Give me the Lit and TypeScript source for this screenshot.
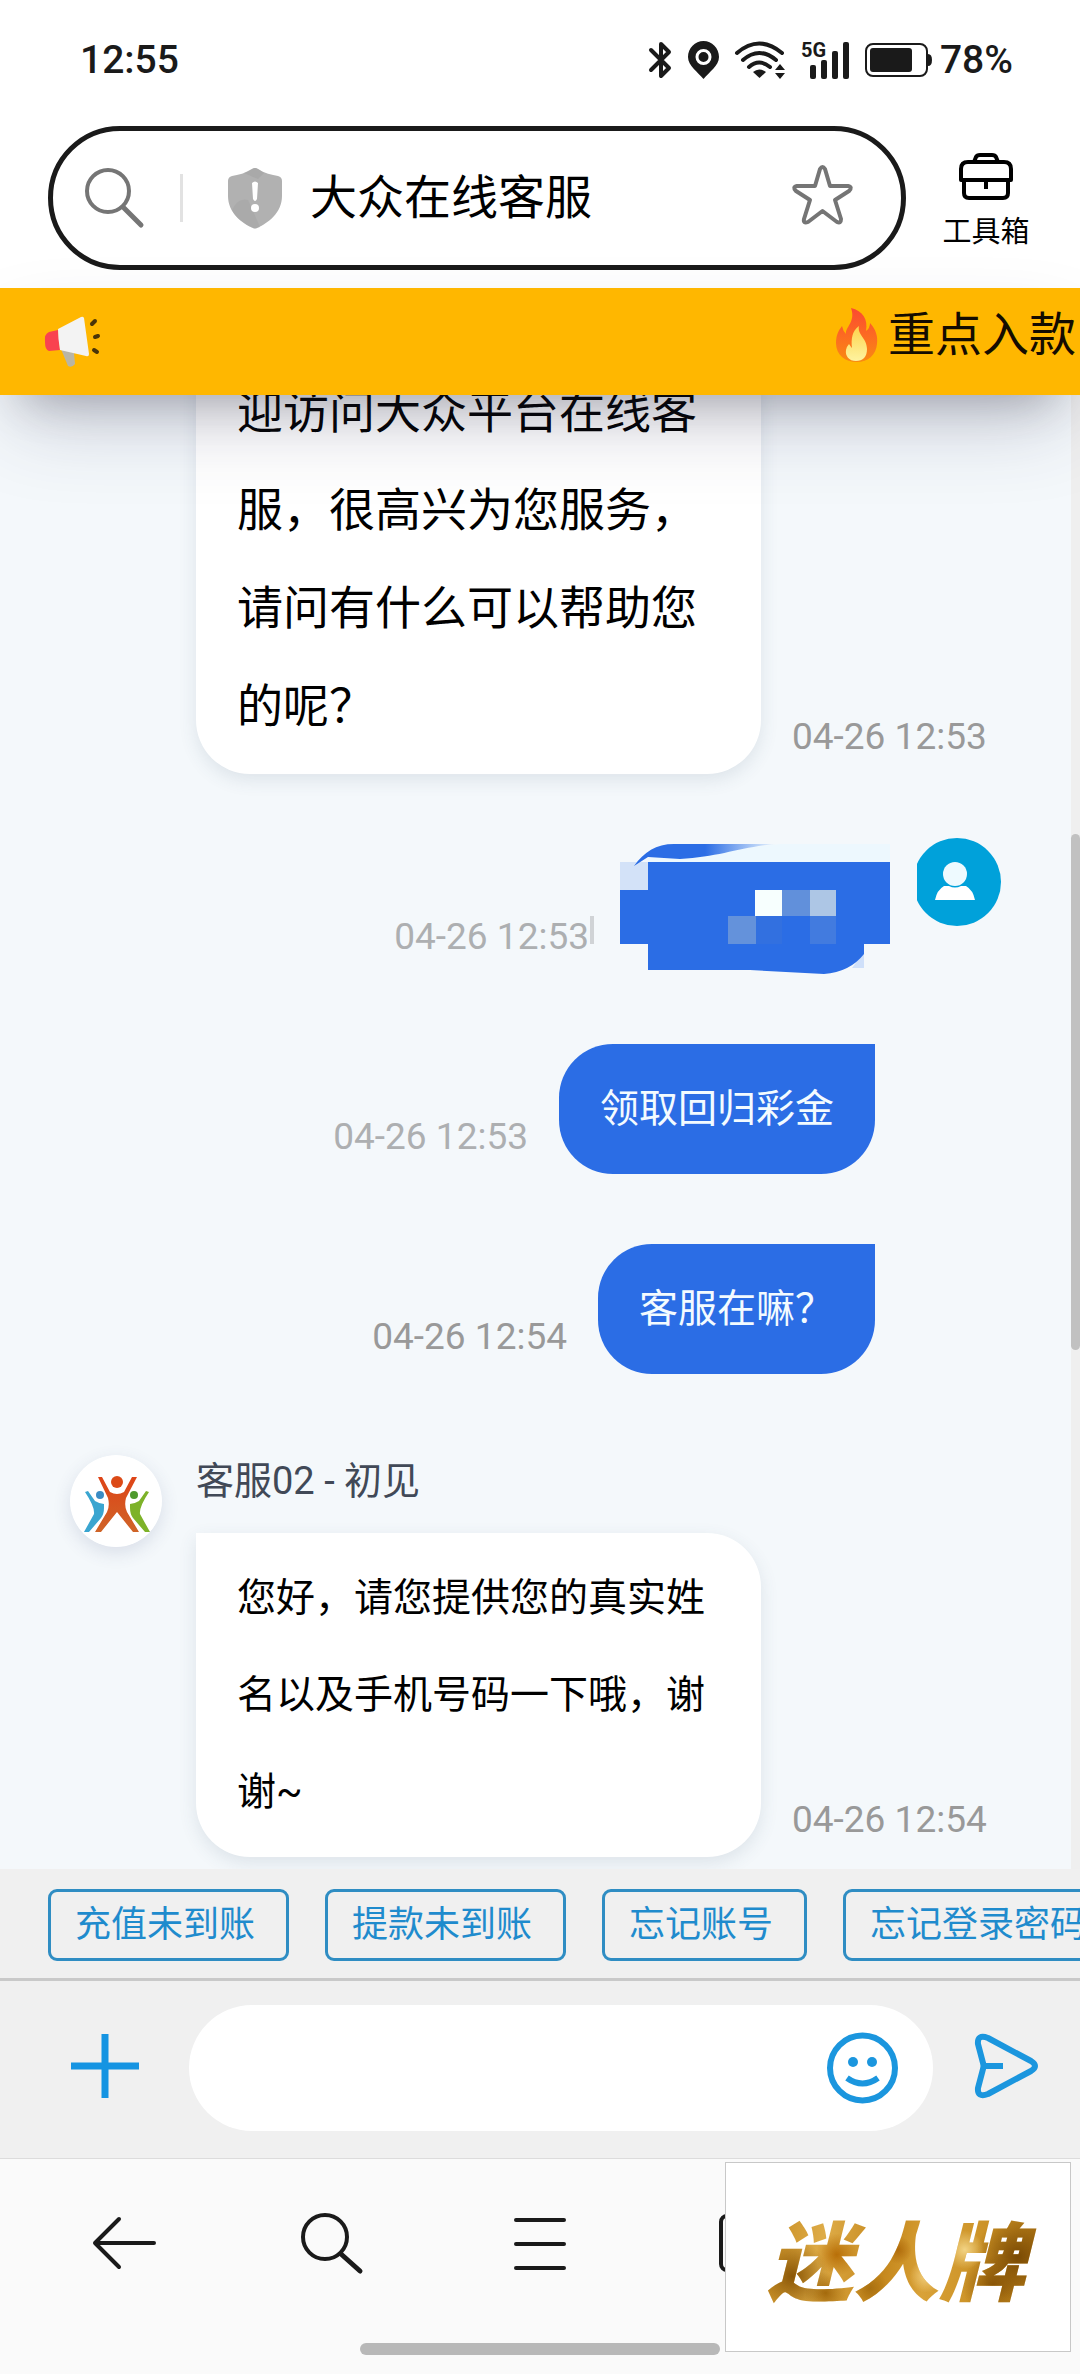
import { LitElement, html, css, svg, nothing } from "lit";
import { customElement, property } from "lit/decorators.js";

const icons = {
  bluetooth: svg`<svg class="icon" width="23" height="38" viewBox="0 0 23 38" aria-hidden="true">
    <path d="M2 9 L20 27 L12 35 V3 L20 11 L2 29" fill="none" stroke="#1a1a1a" stroke-width="4" stroke-linejoin="round" stroke-linecap="round"/></svg>`,
  pin: svg`<svg class="icon" width="31" height="38" viewBox="0 0 31 38" aria-hidden="true">
    <path d="M15.500 0 C24 0 31 7 31 16 C31 25 21 31 15.500 38 C10 31 0 25 0 16 C0 7 7 0 15.500 0Z" fill="#1a1a1a"/>
    <circle cx="15.500" cy="16" r="6.500" fill="#1a1a1a" stroke="#fff" stroke-width="3"/></svg>`,
  wifi: svg`<svg class="icon" width="50" height="38" viewBox="0 0 50 38" aria-hidden="true">
    <g fill="none" stroke="#1a1a1a" stroke-width="4" stroke-linecap="round">
      <path d="M2 12 Q24 -7 47 12"/><path d="M8 19 Q24 5 41 19"/><path d="M14 26 Q24 17 35 26"/></g>
    <path d="M18 31 Q24 26 31 31 L24.500 37Z" fill="#1a1a1a"/>
    <path d="M40 29 L45 23 L50 29Z M40 32 L45 38 L50 32Z" fill="#1a1a1a"/></svg>`,
  signal: svg`<svg class="icon" width="48" height="38" viewBox="0 0 48 38" aria-hidden="true">
    <text x="0" y="16" font-family="Roboto, sans-serif" font-weight="700" font-size="20" fill="#1a1a1a">5G</text>
    <g fill="#1a1a1a"><rect x="9" y="24" width="6" height="14" rx="2"/><rect x="20" y="19" width="6" height="19" rx="2"/>
    <rect x="31" y="10" width="6" height="28" rx="2"/><rect x="42" y="1" width="6" height="37" rx="2"/></g></svg>`,
  battery: svg`<svg class="icon" width="67" height="34" viewBox="0 0 67 34" aria-hidden="true">
    <rect x="1" y="1" width="61" height="32" rx="7" fill="none" stroke="#1a1a1a" stroke-width="2"/>
    <rect x="5" y="5" width="42" height="24" rx="3" fill="#1a1a1a"/>
    <path d="M63 11 Q67 11 67 17 Q67 23 63 23Z" fill="#1a1a1a"/></svg>`,
  find: svg`<svg class="icon" width="58" height="60" viewBox="0 0 58 60" aria-hidden="true">
    <g fill="none" stroke="#757575" stroke-width="4" stroke-linecap="round"><circle cx="23" cy="23" r="21"/><path d="M39 40 L56 57" stroke-width="5"/></g></svg>`,
  shield: svg`<svg class="icon" width="54" height="62" viewBox="0 0 54 62" aria-hidden="true">
    <path d="M24 2 Q27 0 30 2 C36 6 44 8 50 9 Q54 10 54 14 V29 C54 46 40 56 29 61 Q27 62 25 61 C14 56 0 46 0 29 V14 Q0 10 4 9 C10 8 18 6 24 2Z" fill="#b1b1b1"/>
    <path d="M4 43 Q10 30 20 33 L32 60 Q27 62 25 61 C16 57 8 51 4 43Z" fill="#a4a4a4" opacity=".5"/>
    <path d="M16 6 L24 2 Q27 0 30 2 L36 6 L30 12Z" fill="#a3a3a3" opacity=".6"/>
    <path d="M24 16 Q27 13 30 16 L29 32 Q27 36 25 32Z" fill="#fff"/><circle cx="27" cy="41" r="4" fill="#fff"/></svg>`,
  star: svg`<svg class="icon" width="61" height="66" viewBox="0 0 61 66" aria-hidden="true">
    <path d="M28 4 Q30.500 0 33 4 L38 21 H56 Q61 22 57 26 L43 35 L49 54 Q49 59 45 57 L30.500 46 L16 57 Q11 59 12 54 L18 35 L4 26 Q0 22 5 21 H23Z" fill="none" stroke="#757575" stroke-width="4" stroke-linejoin="round"/></svg>`,
  toolbox: svg`<svg class="icon" width="54" height="47" viewBox="0 0 54 47" aria-hidden="true">
    <g fill="none" stroke="#000" stroke-width="4" stroke-linejoin="round" stroke-linecap="round">
      <path d="M15 9 L17 4 Q18 2 21 2 H33 Q36 2 37 4 L39 9"/>
      <path d="M2 27 V16 Q2 9 9 9 H45 Q52 9 52 16 V27Z"/><path d="M5 28 V40 Q5 45 10 45 H44 Q49 45 49 40 V28"/><path d="M27 28 V36" stroke-linecap="butt"/></g></svg>`,
  megaphone: svg`<svg class="icon" width="56" height="54" viewBox="0 0 56 54" aria-hidden="true">
    <path d="M17 34 L30 38 L31 49 Q28 53 24 51Z" fill="#b9b5a5"/>
    <path d="M14 15 L5 17 Q0 19 1 27 Q1 35 5 36 L16 35Z" fill="#f9424f"/>
    <path d="M14 14 L37 2 Q39 1 40 3 L45 39 Q45 42 42 41 L16 35 Q14 24 14 14Z" fill="#f3f3f3"/>
    <g stroke="#4a3409" stroke-width="4" stroke-linecap="round"><path d="M48 9 L51 6"/><path d="M51 22 L54 21"/><path d="M50 35 L53 37"/></g></svg>`,
  fire: svg`<svg class="icon" width="43" height="54" viewBox="0 0 43 54" aria-hidden="true">
    <defs><linearGradient id="flame" x1="0" y1="0" x2="0" y2="1"><stop offset="0" stop-color="#fb4a31"/><stop offset=".5" stop-color="#fc6a22"/><stop offset="1" stop-color="#f98a12"/></linearGradient>
    <linearGradient id="core" x1="0" y1="0" x2="0" y2="1"><stop offset="0" stop-color="#fdd44a"/><stop offset="1" stop-color="#fef3a0"/></linearGradient></defs>
    <path d="M16 0 C28 3 33 11 31 23 Q35 20 35 15 C41 22 43 28 42 36 C41 47 33 54 22 54 C10 54 1 47 1 35 C1 28 3 23 7 18 Q8 23 11 26 C10 19 21 14 16 0Z" fill="url(#flame)"/>
    <path d="M24 18 C22 27 32 30 32 41 C32 49 28 53 21 53 C14 53 10 48 11 42 Q12 38 14 36 Q16 39 17 40 C16 31 17 23 24 18Z" fill="url(#core)"/></svg>`,
  plus: svg`<svg class="icon" width="68" height="68" viewBox="0 0 68 68" aria-hidden="true"><path d="M0 32 H68 M34 0 V64" stroke="#1594e2" stroke-width="7"/></svg>`,
  smile: svg`<svg class="icon" width="71" height="72" viewBox="0 0 71 72" aria-hidden="true">
    <g fill="none" stroke="#1b96de" stroke-width="6"><circle cx="35.500" cy="36" r="32.500"/><path d="M20 46 Q35.500 57 51 46"/></g>
    <circle cx="26" cy="30" r="5" fill="#1b96de"/><circle cx="45" cy="30" r="5" fill="#1b96de"/></svg>`,
  send: svg`<svg class="icon" width="63" height="68" viewBox="0 0 63 68" aria-hidden="true">
    <path d="M3 10 Q2 0 13 4 L56 27 Q64 32 56 37 L13 60 Q2 64 3 54 L8 35 Q9 32 8 29Z M9 32 H28" fill="none" stroke="#1b96de" stroke-width="6" stroke-linejoin="round"/></svg>`,
  back: svg`<svg class="icon" width="65" height="60" viewBox="0 0 65 60" aria-hidden="true">
    <path d="M27 6 L3 30 L27 54 M3 30 H62" fill="none" stroke="#1a1a1a" stroke-width="4" stroke-linecap="round" stroke-linejoin="round"/></svg>`,
  search: svg`<svg class="icon" width="62" height="60" viewBox="0 0 62 60" aria-hidden="true">
    <g fill="none" stroke="#1a1a1a" stroke-width="4" stroke-linecap="round"><circle cx="24" cy="24" r="22"/><path d="M40 41 L59 58" stroke-width="5"/></g></svg>`,
  menu: svg`<svg class="icon" width="52" height="60" viewBox="0 0 52 60" aria-hidden="true">
    <path d="M2 7 H50 M2 31 H50 M2 55 H50" stroke="#1a1a1a" stroke-width="4" stroke-linecap="round"/></svg>`,
  tabs: svg`<svg class="icon" width="58" height="60" viewBox="0 0 58 60" aria-hidden="true">
    <rect x="2" y="3" width="54" height="54" rx="6" fill="none" stroke="#1a1a1a" stroke-width="4"/></svg>`,
};

const agentAvatar = svg`<svg class="agent-avatar" width="92" height="92" viewBox="0 0 92 92" role="img" aria-label="客服02">
  <defs><linearGradient id="orange" x1="0" y1="0" x2="0" y2="1"><stop offset="0" stop-color="#de4417"/><stop offset="1" stop-color="#cf6428"/></linearGradient></defs>
  <circle cx="46" cy="46" r="46" fill="#fff"/>
  <path d="M15 37 L18 36 L25 46 Q30 49 34 49 L34 53 Q34 59 31 63 L19 77 H14 L24 59 Q25 52 15 37Z" fill="#3aa5d0"/>
  <circle cx="30" cy="40" r="4" fill="#3a8cc4"/>
  <path d="M79 37 L76 36 L69 46 Q64 49 60 49 L60 53 Q60 59 63 63 L75 77 H80 L70 59 Q69 52 79 37Z" fill="#7db229"/>
  <circle cx="64" cy="40" r="4" fill="#4f9a2e"/>
  <path d="M28 22 L32 22 L40 37 Q47 41 54 37 L62 22 L67 22 L56 43 Q54 51 57 57 L69 77 H63 L47 57 L31 77 H25 L37 57 Q40 51 38 43Z" fill="url(#orange)"/>
  <circle cx="47" cy="27" r="6" fill="#dc4a17"/>
</svg>`;

const userAvatar = svg`<svg class="user-avatar" width="88" height="88" viewBox="0 0 88 88" role="img" aria-label="我">
  <circle cx="44" cy="44" r="44" fill="#00a1da"/>
  <path d="M0 14 H4 V78 H0Z" fill="#f4f8fb"/>
  <circle cx="42" cy="36" r="12" fill="#eefaff"/>
  <path d="M22 62 Q24 52 31 48 H36 Q42 51 48 48 H53 Q60 52 62 62Z" fill="#fff"/>
</svg>`;

/* Masked message: coarse pixel blocks over the bubble shape. */
const maskedBubble = svg`<svg class="masked" width="255" height="130" viewBox="0 0 255 130" role="img" aria-label="已打码消息">
  <defs><linearGradient id="fade" x1="0" y1="0" x2="1" y2="0"><stop offset="0" stop-color="#2b6de5"/><stop offset=".5" stop-color="#2b6de5"/><stop offset="1" stop-color="#ecf7fe"/></linearGradient></defs>
  <path d="M160 0 H270 V18 H28 V14Z" fill="#edf8fe"/>
  <rect x="0" y="18" width="28" height="28" fill="#d3e2f8"/>
  <path d="M14 22 C24 8 36 0 54 0 H156 C120 3 100 13 60 15 L28 13Z" fill="url(#fade)"/>
  <path d="M232 124 L244 108 V124Z" fill="#cfe0fa"/>
  <path d="M28 18 H270 V100 H244 V110 Q230 128 204 130 L130 126 H28 V100 H0 V46 H28Z" fill="#2b6de5"/>
  <rect x="135" y="46" width="27" height="26" fill="#f7fffe"/>
  <rect x="162" y="46" width="28" height="26" fill="#6190db"/>
  <rect x="190" y="46" width="26" height="26" fill="#adc6e5"/>
  <rect x="108" y="72" width="28" height="28" fill="#6492db"/>
  <rect x="136" y="72" width="26" height="28" fill="#3270e0"/>
  <rect x="190" y="72" width="26" height="28" fill="#427bdf"/>
  <rect x="-30" y="72" width="4" height="28" fill="#d0d3d6"/>
</svg>`;

const shared = css`
  * { box-sizing: border-box; }
  button {
    appearance: none; border: 0; padding: 0; margin: 0; background: none;
    font: inherit; color: inherit; cursor: pointer;
  }
  .icon { display: block; flex: none; overflow: visible; }
`;

@customElement("status-bar")
export class StatusBar extends LitElement {
  static styles = [shared, css`
    :host {
      display: flex; align-items: center; justify-content: space-between;
      height: 120px; padding: 0 67px 0 80px; color: #1a1a1a; font-size: 39px; font-weight: 500;
    }
    .tray { display: flex; align-items: center; gap: 16px; }
    .power { display: flex; align-items: center; gap: 8px; }
  `];
  render() {
    return html`
      <span>12:55</span>
      <div class="tray">
        ${icons.bluetooth}${icons.pin}${icons.wifi}${icons.signal}
        <span class="power">${icons.battery}<span>78%</span></span>
      </div>`;
  }
}

@customElement("address-bar")
export class AddressBar extends LitElement {
  static styles = [shared, css`
    :host { display: flex; align-items: center; gap: 36px; padding: 6px 50px 18px 48px; }
    .pill {
      flex: 1; display: flex; align-items: center; height: 144px; min-width: 0;
      padding: 0 48px 0 32px; border: 5px solid #1a1a1a; border-radius: 72px;
    }
    .divider { width: 3px; height: 48px; margin: 0 45px 0 37px; background: #e2e2e2; }
    .site { flex: 1; display: flex; align-items: center; gap: 28px; font-size: 47px; line-height: 56px; color: #000; }
    .tools { width: 88px; display: flex; flex-direction: column; align-items: center; gap: 12px; padding-top: 8px; font-size: 29px; line-height: 40px; white-space: nowrap; }
  `];
  render() {
    return html`
      <div class="pill">
        <button aria-label="搜索">${icons.find}</button>
        <span class="divider"></span>
        <button class="site">${icons.shield}<span>大众在线客服</span></button>
        <button aria-label="收藏">${icons.star}</button>
      </div>
      <button class="tools">${icons.toolbox}<span>工具箱</span></button>`;
  }
}

@customElement("notice-banner")
export class NoticeBanner extends LitElement {
  static styles = [shared, css`
    :host {
      display: flex; align-items: center; justify-content: space-between;
      height: 107px; padding: 0 4px 0 44px; background: #ffb700;
      position: relative; z-index: 1;
      box-shadow: 0 39px 81px -15px rgba(50, 50, 93, 0.25), 0 24px 48px -24px rgba(0, 0, 0, 0.3);
    }
    .marquee { display: flex; align-items: center; gap: 10px; padding-bottom: 13px; font-size: 47px; line-height: 56px; color: #140c00; white-space: nowrap; }
  `];
  render() {
    return html`${icons.megaphone}<div class="marquee">${icons.fire}<span>重点入款</span></div>`;
  }
}

@customElement("chat-message")
export class ChatMessage extends LitElement {
  @property() from: "agent" | "user" = "agent";
  @property() name = "";
  @property() time = "";
  @property() text = "";
  @property({ type: Boolean }) large = false;
  @property({ type: Boolean }) faded = false;
  @property({ type: Boolean }) masked = false;

  static styles = [shared, css`
    :host { display: block; flex: none; }
    .row { display: flex; }
    .agent { padding-left: 70px; gap: 34px; }
    .agent-slot { width: 92px; flex: none; padding-top: 11px; }
    .agent-avatar { display: block; border-radius: 50%; box-shadow: 0 6px 18px rgba(60, 70, 120, 0.14); }
    .name { font-size: 38px; line-height: 74px; padding-bottom: 15px; color: #414957; }
    .line { display: flex; align-items: flex-end; gap: 31px; }
    .bubble { font-size: 39px; line-height: 97px; padding: 17px 41px 16px; }
    .agent .bubble {
      max-width: 565px; background: #fff; color: #000;
      border-radius: 0 54px 54px 54px; box-shadow: 0 6px 18px rgba(60, 80, 110, 0.12);
    }
    .large .bubble { font-size: 46px; line-height: 98px; padding-bottom: 19px; }
    .user { justify-content: flex-end; padding-right: 70px; gap: 38px; }
    .user .bubble { background: #2b6de5; color: #f3fbff; border-radius: 54px 0 54px 54px; }
    .user-slot { width: 88px; flex: none; }
    .user-avatar { display: block; margin-top: -6px; }
    .masked { display: block; overflow: visible; }
    time { font-size: 37px; line-height: 42px; padding-bottom: 16px; color: #999; white-space: nowrap; }
    .faded time { color: #adafb1; }
  `];

  render() {
    const stamp = html`<time>${this.time}</time>`;
    if (this.from === "user") {
      return html`<div class="row user ${this.faded ? "faded" : ""}">
        <div class="line">${stamp}${this.masked ? maskedBubble : html`<div class="bubble">${this.text}</div>`}</div>
        <div class="user-slot">${this.masked ? userAvatar : nothing}</div>
      </div>`;
    }
    return html`<div class="row agent ${this.large ? "large" : ""}">
      <div class="agent-slot">${this.name ? agentAvatar : nothing}</div>
      <div>
        ${this.name ? html`<div class="name">${this.name}</div>` : nothing}
        <div class="line"><div class="bubble">${this.text}</div>${stamp}</div>
      </div>
    </div>`;
  }
}

@customElement("quick-replies")
export class QuickReplies extends LitElement {
  static styles = [shared, css`
    :host { display: flex; gap: 36px; padding: 20px 0 17px 48px; overflow: hidden; background: #f0f0f0; border-bottom: 3px solid #c9c9c9; }
    .chip {
      flex: none; height: 72px; padding: 0 31px 0 24px; border: 3px solid #2f8dc3; border-radius: 9px;
      font-size: 36px; line-height: 66px; color: #1f8bcd; white-space: nowrap;
    }
  `];
  render() {
    return ["充值未到账", "提款未到账", "忘记账号", "忘记登录密码"].map(
      (label) => html`<button class="chip">${label}</button>`
    );
  }
}

@customElement("message-composer")
export class MessageComposer extends LitElement {
  static styles = [shared, css`
    :host { display: flex; align-items: center; padding: 24px 42px 27px 71px; background: #f0f0f0; }
    .field {
      flex: 1; display: flex; align-items: center; height: 126px; min-width: 0;
      margin: 0 42px 0 50px; padding: 0 35px 0 60px; border-radius: 63px; background: #fff;
    }
    .input { flex: 1; min-width: 0; height: 80px; border: 0; outline: 0; background: none; font: inherit; font-size: 39px; }
  `];
  render() {
    return html`
      <button aria-label="添加">${icons.plus}</button>
      <div class="field">
        <input class="input" type="text" aria-label="输入消息">
        <button aria-label="表情">${icons.smile}</button>
      </div>
      <button aria-label="发送">${icons.send}</button>`;
  }
}

@customElement("browser-nav")
export class BrowserNav extends LitElement {
  static styles = [shared, css`
    :host { display: block; padding-bottom: 19px; background: #fafafa; border-top: 1px solid #dcdcdc; }
    .items { display: grid; grid-template-columns: repeat(5, 1fr); height: 168px; padding: 0 20px; }
    .item { display: flex; align-items: center; justify-content: center; }
    .handle { width: 33.333%; height: 12px; margin: 16px auto 0; border-radius: 6px; background: #b8b8b8; }
  `];
  render() {
    return html`
      <nav class="items">
        <button class="item" aria-label="返回">${icons.back}</button>
        <button class="item" aria-label="搜索">${icons.search}</button>
        <button class="item" aria-label="菜单">${icons.menu}</button>
        <button class="item" aria-label="标签页">${icons.tabs}</button>
      </nav>
      <div class="handle"></div>`;
  }
}

@customElement("app-root")
export class AppRoot extends LitElement {
  static styles = [shared, css`
    :host {
      display: flex; flex-direction: column; height: 100vh; position: relative; overflow: hidden;
      background: #fff; font-family: Roboto, "Noto Sans CJK SC", sans-serif;
    }
    .chat { flex: 1; min-height: 0; display: flex; background: #f4f8fb; }
    .messages {
      flex: 1; min-width: 0; display: flex; flex-direction: column; justify-content: flex-end;
      gap: 70px; padding-bottom: 12px; overflow: hidden;
    }
    .track { width: 9px; padding-top: 439px; background: #efefef; }
    .thumb { height: 516px; border-radius: 5px; background: #c1c1c1; }
    .badge {
      position: absolute; right: 9px; bottom: 22px; width: 346px; height: 190px;
      display: flex; align-items: center; justify-content: center;
      border: 1px solid #c8c8c8; background: #fff;
    }
    .brand {
      padding: 0 12px 0 8px; font-family: "Noto Sans CJK SC", sans-serif; font-size: 86px; line-height: 120px;
      font-weight: 900; font-style: italic; color: transparent;
      background:
        radial-gradient(circle at 12% 66%, #8a5606 0, transparent 14%),
        radial-gradient(circle at 28% 48%, #b86f08 0, transparent 10%),
        radial-gradient(circle at 24% 80%, #a3690c 0, transparent 9%),
        radial-gradient(circle at 50% 44%, #b06c0c 0, transparent 9%),
        radial-gradient(circle at 60% 66%, #f0cc7a 0, transparent 9%),
        radial-gradient(circle at 40% 76%, #a86f10 0, transparent 9%),
        radial-gradient(circle at 74% 44%, #f2d384 0, transparent 9%),
        radial-gradient(circle at 93% 50%, #7a4a04 0, transparent 16%),
        radial-gradient(circle at 84% 74%, #8a5608 0, transparent 12%),
        linear-gradient(100deg, #c28518, #deac48 24%, #c4861b 45%, #d9a238 60%, #ca9024 80%, #a86f10);
      -webkit-background-clip: text; background-clip: text;
    }
  `];
  render() {
    return html`
      <status-bar></status-bar>
      <address-bar></address-bar>
      <notice-banner></notice-banner>
      <main class="chat">
        <div class="messages">
          <chat-message large time="04-26 12:53" text="迎访问大众平台在线客服，很高兴为您服务，请问有什么可以帮助您的呢？"></chat-message>
          <chat-message from="user" masked faded time="04-26 12:53"></chat-message>
          <chat-message from="user" faded time="04-26 12:53" text="领取回归彩金"></chat-message>
          <chat-message from="user" time="04-26 12:54" text="客服在嘛？"></chat-message>
          <chat-message name="客服02 - 初见" time="04-26 12:54" text="您好，请您提供您的真实姓名以及手机号码一下哦，谢谢~"></chat-message>
        </div>
        <div class="track"><div class="thumb"></div></div>
      </main>
      <quick-replies></quick-replies>
      <message-composer></message-composer>
      <browser-nav></browser-nav>
      <div class="badge"><span class="brand">迷人牌</span></div>`;
  }
}
